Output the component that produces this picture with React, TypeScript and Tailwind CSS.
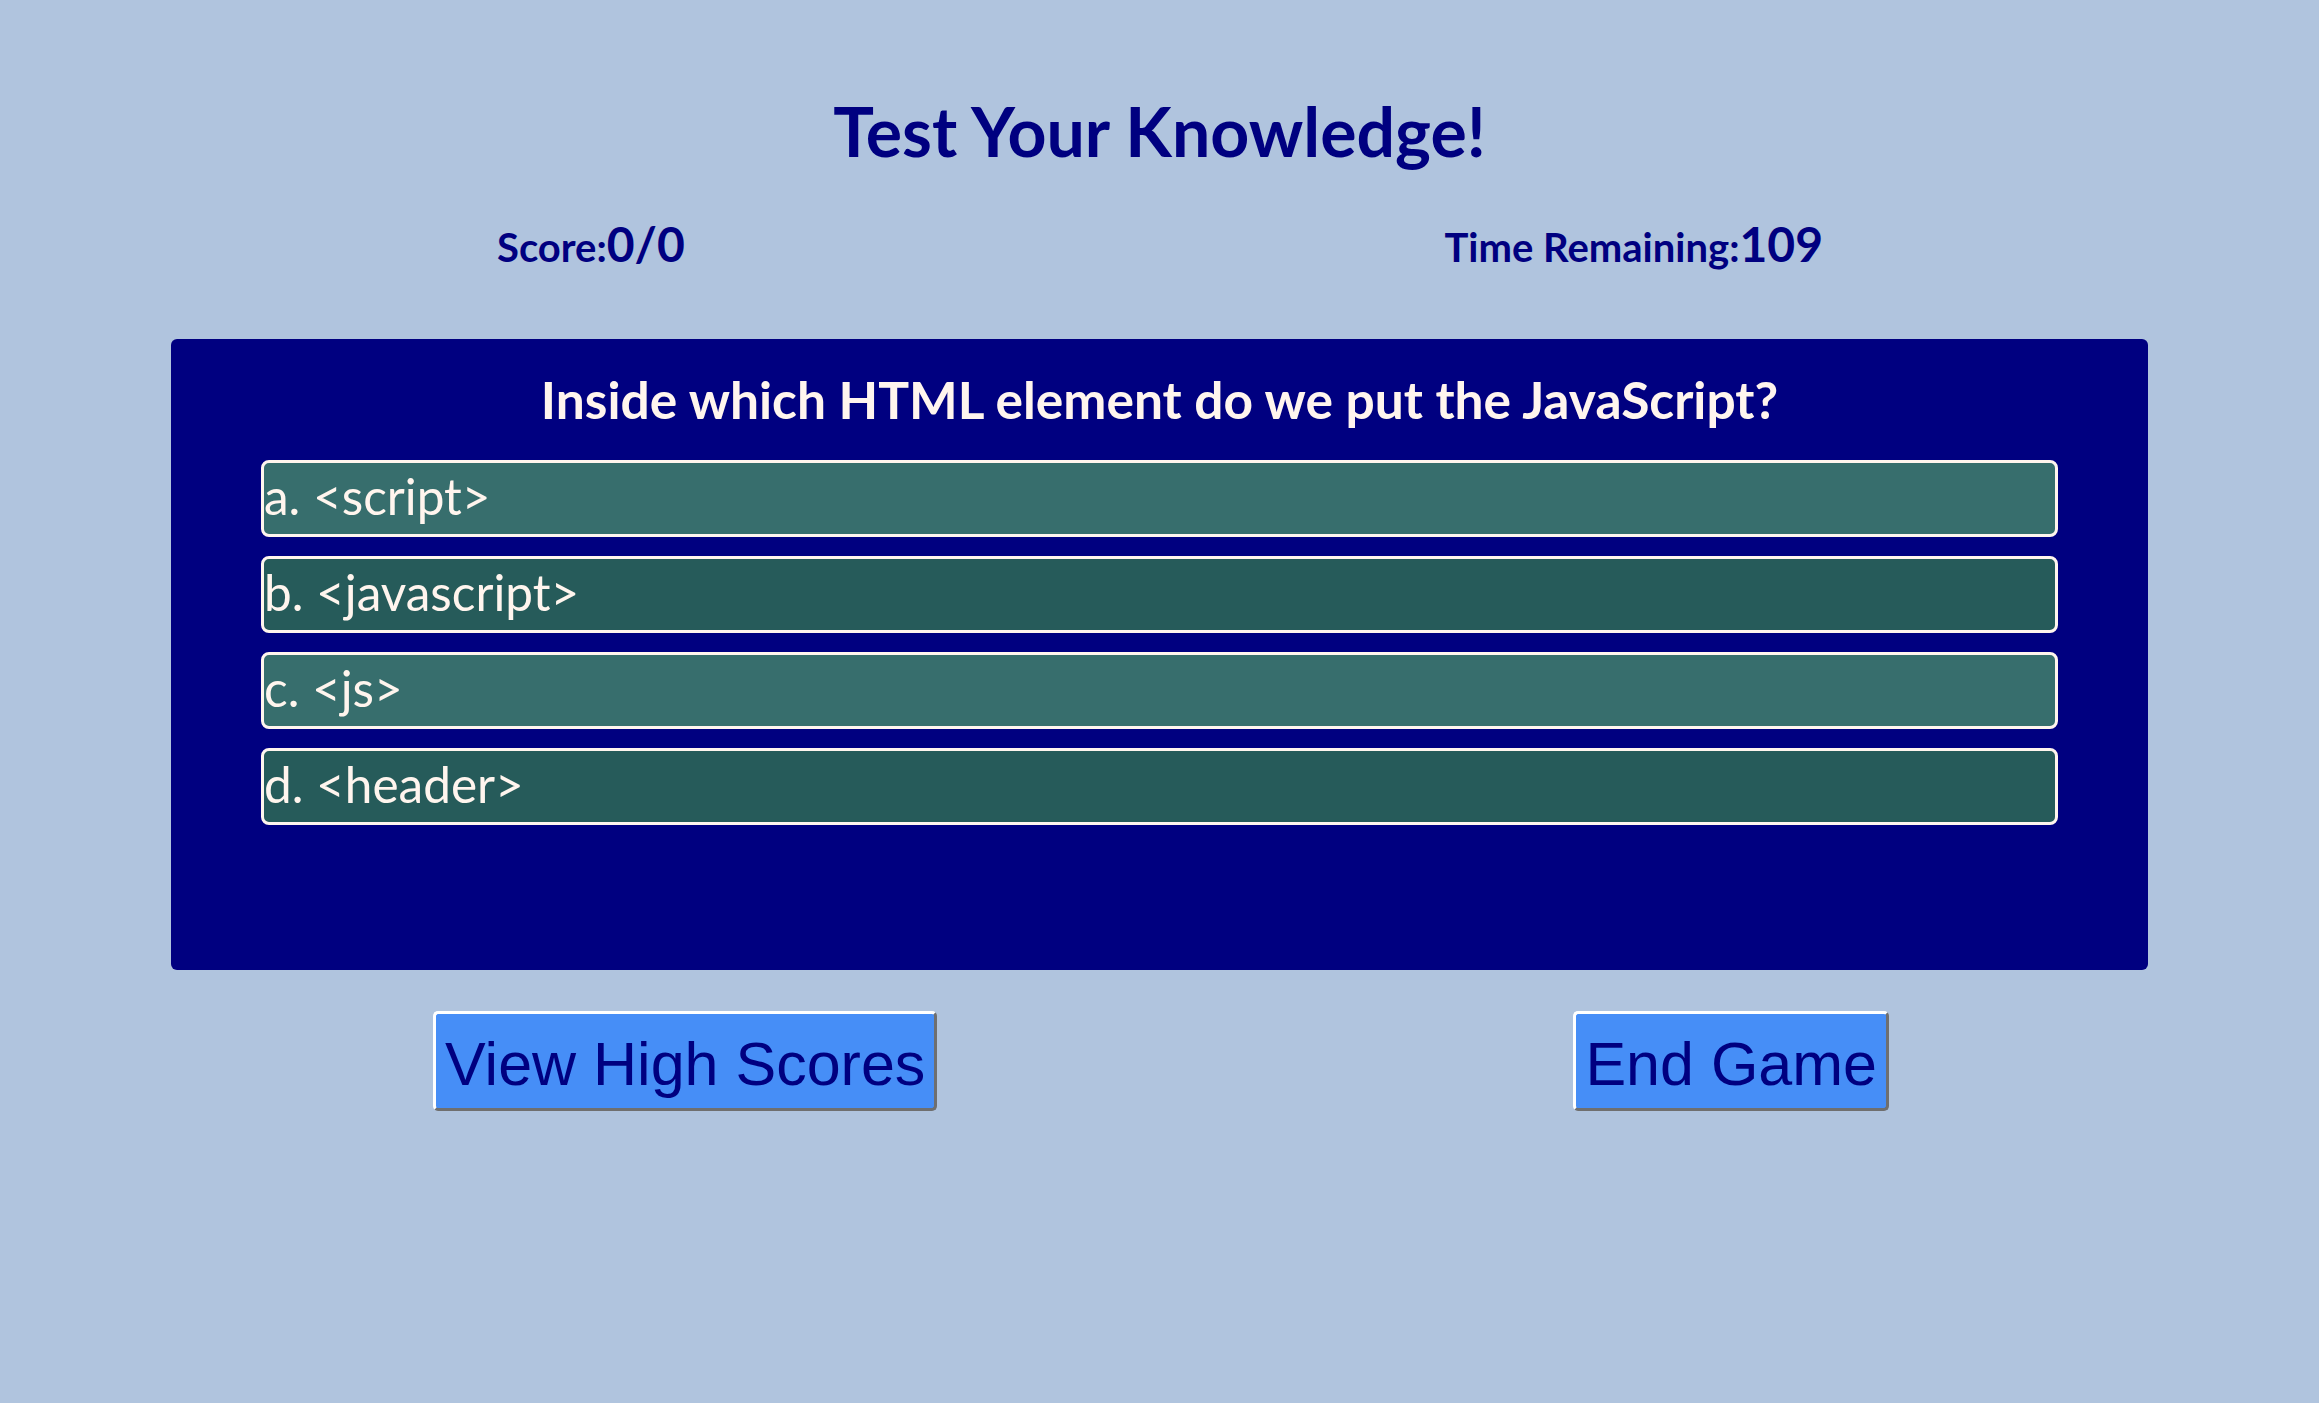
import React from 'react';

interface Answer {
  label: string;
  text: string;
}

const answers: Answer[] = [
  { label: 'a.', text: '<script>' },
  { label: 'b.', text: '<javascript>' },
  { label: 'c.', text: '<js>' },
  { label: 'd.', text: '<header>' },
];

const QuizPage: React.FC = () => {
  return (
    <div className="min-h-screen w-full bg-[#b0c4de] font-['Lato','Noto_Sans',sans-serif] text-[#000080]">
      <h1 className="pt-[91px] text-center text-[68px] font-bold leading-[80px]">Test Your Knowledge!</h1>

      <div className="mt-[44px] flex items-baseline justify-between pl-[497px] pr-[496px] font-bold">
        <div className="leading-[58px]">
          <span className="text-[40px]">Score:</span>
          <span className="text-[48px]">0/0</span>
        </div>
        <div className="leading-[58px]">
          <span className="text-[40px]">Time Remaining:</span>
          <span className="text-[48px]">109</span>
        </div>
      </div>

      <div className="mx-[171px] mt-[54px] rounded-md bg-[#000080] px-[90px] pt-[30px] pb-[145px]">
        <h2 className="text-center text-[51.5px] font-bold leading-[61px] text-[#fff5ee]">
          Inside which HTML element do we put the JavaScript?
        </h2>
        <div className="mt-[30px] flex flex-col gap-[19px]">
          {answers.map((answer, index) => (
            <button
              key={answer.label}
              className={`h-[77px] w-full rounded-lg border-[3px] border-[#fff5ee] pb-[5px] text-left text-[49.5px] leading-[58px] text-[#fff5ee] ${
                index % 2 === 0 ? 'bg-[#376e6d]' : 'bg-[#265b5a]'
              }`}
            >
              {answer.label} {answer.text}
            </button>
          ))}
        </div>
      </div>

      <div className="mt-[41px] flex items-start justify-between pl-[433px] pr-[430px] font-['Liberation_Sans',Arial,sans-serif]">
        <button className="rounded-[5px] border-[3px] border-t-white border-l-white border-r-[#6f6f6f] border-b-[#6f6f6f] bg-[#468ef7] px-[9px] pt-[15px] pb-[9px] text-[61px] leading-[70px] text-[#000080]">
          View High Scores
        </button>
        <button className="rounded-[5px] border-[3px] border-t-white border-l-white border-r-[#6f6f6f] border-b-[#6f6f6f] bg-[#468ef7] px-[9px] pt-[15px] pb-[9px] text-[61px] leading-[70px] text-[#000080]">
          End Game
        </button>
      </div>
    </div>
  );
};

export default QuizPage;
